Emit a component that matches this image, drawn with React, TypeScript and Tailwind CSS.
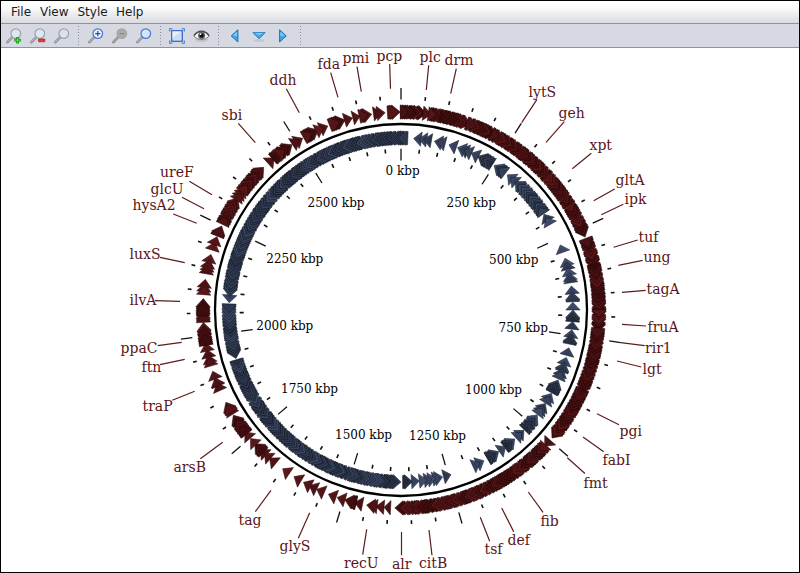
import React from "react";

const CX = 401;
const CY = 310;
const DEG_PER_50 = 6.5622;

type Pt = [number, number];

function polar(r: number, deg: number): Pt {
  const a = (deg * Math.PI) / 180;
  return [CX + r * Math.sin(a), CY - r * Math.cos(a)];
}

const str = (pts: Pt[]) => pts.map((p) => p[0].toFixed(2) + "," + p[1].toFixed(2)).join(" ");

// Small deterministic generator, so the gene spacing is stable between renders.
function makeRandom(seed: number) {
  let s = seed;
  return () => {
    s = (s * 16807) % 2147483647;
    return s / 2147483647;
  };
}

// [start angle, end angle, spacing between heads]
type Run = [number, number, number];

const FORWARD: Run[] = [
  [-4.1, -0.2, 1.1], [-0.2, 7.4, 0.95], [6.4, 8.8, 1.2], [7.9, 13.6, 1], [12.6, 20.5, 1], [20.4, 28.6, 1.1], [28.2, 49.5, 0.95],
  [48.5, 60, 1], [59, 68.4, 1], [68.8, 78, 1], [77.3, 92, 1.1], [91, 96.5, 1.1], [96, 115, 0.9], [114.6, 130.3, 0.95], [131, 133.5, 2.4],
  [133, 178.3, 0.95], [177.6, 181.8, 1.1],
  [183, 184.9, 2], [184.7, 187.3, 2.6], [186.9, 190, 1.2],
  [191.2, 193.6, 1.2], [193.1, 196.5, 0.8], [196, 198.8, 1.4], [198.9, 201.5, 2.6],
  [202.6, 205.2, 2.6], [205, 207.6, 2.6], [207, 209.5, 2.6], [209.7, 212.7, 1.2],
  [214.1, 216.7, 2.6], [219, 221.6, 2.6], [221.3, 225.3, 1.3], [224, 227.6, 1.1], [226.8, 229.5, 2.6],
  [229, 232, 2.6], [231.2, 237.9, 1], [237.9, 240.6, 2.6], [238.8, 242.2, 0.8],
  [245.8, 248.4, 2.6], [247.4, 250, 1.1], [249.4, 252, 2.6],
  [252.6, 258.5, 1.2], [257.6, 260.4, 2.6], [259.7, 266.4, 0.9], [266.4, 270, 1.1], [269, 273.3, 1.1],
  [274.3, 278.9, 1.4], [280.1, 286.3, 1.2], [287.6, 290, 2.6], [289.2, 291.7, 2.6],
  [291.9, 295.1, 1.1], [295.6, 304.5, 1.1], [303, 308, 1.2], [306.5, 316.1, 1],
  [317.4, 320.2, 2.6], [319.6, 323.5, 1.1], [322.6, 326.6, 1.1], [325.9, 330.2, 1.2],
  [330.5, 335.3, 0.9], [334.3, 338.3, 1.2], [338.8, 343.6, 1], [342.8, 345.8, 1.2],
  [345.9, 348, 2.2], [347.8, 351.5, 1.1], [352, 355.4, 1.2],
];

const REVERSE: Run[] = [
  [4.2, 6.8, 2.7], [6, 10.4, 1.7], [11.2, 15.2, 1.7], [16.2, 18.9, 2.7], [19.2, 24.5, 1.2],
  [24.2, 27.6, 1.7], [26.6, 32.2, 1.1], [32.8, 37.4, 1.1], [38.2, 42.6, 1.7], [41.6, 52.4, 1.1],
  [51.6, 56, 1.1], [56.2, 61, 1.6], [67.8, 70.7, 2.8], [72.5, 76.4, 1.5], [75.8, 81.2, 1.3],
  [82, 84.8, 2.7], [84, 87.3, 1.1], [87.4, 90.6, 1.6], [90, 93.9, 1.1], [93.8, 96.4, 2.6],
  [96.6, 99.3, 2.7], [98.2, 101.7, 1.1], [102.7, 105.5, 2.8], [106, 108.8, 2.7], [107.8, 111, 1.1], [110, 114.6, 1.2], [114, 118.8, 1.1],
  [119, 123, 1.2], [122.9, 127.8, 1.2], [127.6, 134.2, 1.1], [134.4, 138.4, 1.2],
  [138.6, 143, 1.1], [142.6, 145.4, 2.6], [145.4, 149.8, 1.1], [151.2, 153.8, 2.6], [152.7, 156.1, 1.2],
  [163.1, 165.7, 2.6], [166, 174.6, 1.2], [173.9, 176.5, 2.6], [176.2, 179.7, 1.1],
  [180, 184.5, 0.9], [184, 196, 1], [195.5, 231, 1], [230.6, 237.5, 1.1], [237, 253.2, 1], [253.6, 272, 1], [272.4, 275, 2], [274.4, 286, 1.05],
  [285.4, 302, 1], [301.4, 325, 1], [324.4, 341, 1], [340, 352, 1], [351, 355, 1.1], [354, 362.3, 1],
];

const REDS = ["#3a0c0d", "#481113", "#521416", "#370b0c", "#5a181a", "#4e1315"];
const BLUES = ["#252d3f", "#2c364c", "#344059", "#222a3a", "#3b4867", "#334060"];

interface Gene {
  body: string;
  fill: string;
  light: string;
}

// Neighbouring dense runs overlap, so no wedge of background opens between them.
function joinRuns(runs: Run[], dir: 1 | -1): Run[] {
  return runs.map(([a, b, step], i) => {
    const prev = runs[i - 1];
    const next = runs[i + 1];
    if (dir === 1 && prev && prev[1] > a && step < 1.15 && prev[2] < 1.15) return [a - 1.1, b, step];
    if (dir === -1 && next && next[0] < b && step < 1.15 && next[2] < 1.15) return [a, b + 1.4, step];
    return [a, b, step];
  });
}

function buildGenes(runs: Run[], radius: number, dir: 1 | -1, fills: string[], seed: number): Gene[] {
  const rnd = makeRandom(seed);
  const head = dir === 1 ? 2.4 : 2.6;
  const barb = 7.2;
  const half = 6.6;
  const genes: Gene[] = [];
  for (const [a, b, step] of joinRuns(runs, dir)) {
    const from = dir === 1 ? a : b;
    const length = b - a;
    const tips: number[] = [];
    let t = length;
    while (t >= Math.min(head * 0.9, length)) {
      tips.push(t);
      t -= step * (0.6 + rnd() * 0.8);
    }
    // Heads further along the strand are laid down first.
    for (const tip of tips) {
      const dense = step < 1.15;
      const base = Math.max(0, tip - head);
      const back = dense ? Math.max(0, base - step * 0.6) : base;
      const at = (r: number, d: number) => polar(r, from + dir * d);
      const pts: Pt[] = [
        at(radius - half, back),
        at(radius + half, back),
        at(radius + half, base),
        at(radius + barb, base),
        at(radius, tip),
        at(radius - barb, base),
        at(radius - half, base),
      ];
      const edge: Pt[] = [at(radius + half - 1, base + 0.15), at(radius, tip - 0.35), at(radius - half + 1, base + 0.15)];
      const shade = dense ? Math.floor(rnd() * 4) : [1, 2, 4, 5][Math.floor(rnd() * 4)];
      genes.push({ body: str(pts), fill: fills[shade], light: str(edge) });
    }
  }
  return genes;
}

const forwardGenes = buildGenes(FORWARD, 198, 1, REDS, 4711);
const reverseGenes = buildGenes(REVERSE, 172, -1, BLUES, 1234);

type Label = [string, number, number, number, number, number, number];

// name, text x, baseline, leader x1 y1 x2 y2
const LABELS: Label[] = [
  ["pcp", 376.5, 61, 389.7, 64, 390.5, 88.7],
  ["pmi", 342.5, 63, 357, 66.7, 361.3, 91.7],
  ["fda", 317.5, 69, 330.7, 72.7, 338, 97.3],
  ["ddh", 269.5, 85, 286.3, 88.7, 299.3, 112.7],
  ["sbi", 221.5, 120, 238.3, 123.3, 255.3, 142.7],
  ["plc", 419.5, 62, 428.7, 65.3, 426.3, 90],
  ["drm", 444.5, 65, 456.3, 68.7, 450.7, 93.7],
  ["lytS", 528.5, 97, 537, 99.3, 521.7, 122.7],
  ["geh", 558.5, 118, 564.3, 121.7, 546, 142.3],
  ["xpt", 589.5, 150, 591.3, 153.3, 572.3, 168.7],
  ["gltA", 615.5, 185, 614.7, 189, 593.7, 200.7],
  ["ipk", 624.5, 204, 623.3, 204.3, 601.3, 214.7],
  ["tuf", 638.5, 242, 637.7, 240, 613.7, 247.3],
  ["ung", 643.5, 262, 642.7, 260.3, 618.3, 265.3],
  ["tagA", 646.5, 294, 645.7, 290.3, 622, 292.3],
  ["fruA", 647.5, 332, 646, 326, 622, 324.3],
  ["rir1", 645, 353, 644.7, 345.7, 620.7, 342.7],
  ["lgt", 642.5, 374, 641.3, 367, 617, 361],
  ["pgi", 619.5, 436, 619, 424.7, 597, 413.7],
  ["fabI", 602.5, 465, 603.7, 451.7, 583, 437],
  ["fmt", 583.5, 488, 585, 473.5, 567.3, 457.7],
  ["fib", 540.5, 526, 543, 512.3, 528.3, 492],
  ["def", 507.5, 545, 513.7, 531.7, 501.7, 508],
  ["tsf", 484.5, 554, 489.7, 541.3, 480.3, 517.3],
  ["citB", 419, 568, 432, 555.3, 429, 530],
  ["alr", 392, 569, 401.5, 555.3, 401.5, 532],
  ["recU", 344, 568, 362.7, 554.7, 366.7, 529.3],
  ["glyS", 279.5, 551, 298.3, 538.3, 309.7, 512.7],
  ["tag", 238.5, 525, 255.3, 511.7, 271, 490.3],
  ["arsB", 173.5, 472, 200.3, 458.7, 222.7, 442.3],
  ["traP", 142.5, 411, 172.3, 400.3, 194.7, 391.3],
  ["ftn", 141.5, 372, 160, 364.7, 184.7, 359.3],
  ["ppaC", 120.5, 353, 157.7, 345.7, 181.7, 342.3],
  ["ilvA", 129.5, 305, 155, 300.7, 180, 301.3],
  ["luxS", 129.5, 259, 160, 257.3, 184.7, 262.7],
  ["hysA2", 132.5, 210, 173.3, 214, 196.7, 223.3],
  ["glcU", 150.5, 194, 182, 197.3, 204, 208.7],
  ["ureF", 160, 177, 189.3, 181.3, 212, 194.7],
];

const SCALE: [string, number, number][] = [
  ["0 kbp", 385.5, 175],
  ["250 kbp", 446.5, 207],
  ["500 kbp", 489, 264],
  ["750 kbp", 498.5, 332],
  ["1000 kbp", 465, 394],
  ["1250 kbp", 409, 440],
  ["1500 kbp", 335, 439],
  ["1750 kbp", 281, 393],
  ["2000 kbp", 256.3, 330],
  ["2250 kbp", 266.3, 263],
  ["2500 kbp", 307.5, 207],
];

const ticks = Array.from({ length: 55 }, (_, i) => {
  const deg = i * DEG_PER_50;
  const major = i % 5 === 0;
  return {
    major,
    outer: [polar(210.5, deg), polar(major ? 222 : 214.3, deg)],
    inner: [polar(161.3, deg), polar(major ? 149.6 : 157.3, deg)],
  };
});

function GenomeMap() {
  return (
    <svg width="798" height="524" viewBox="1 48 798 524" className="block">
      <circle cx={CX} cy={CY} r="186" fill="none" stroke="#000" strokeWidth="2.3" />
      {forwardGenes.map((g, i) => (
        <g key={i}>
          <polygon points={g.body} fill={g.fill} stroke="#1f0506" strokeWidth="0.5" />
          <polyline points={g.light} fill="none" stroke="#7a2426" strokeWidth="0.5" opacity="0.6" />
        </g>
      ))}
      {reverseGenes.map((g, i) => (
        <g key={i}>
          <polygon points={g.body} fill={g.fill} stroke="#10151f" strokeWidth="0.5" />
          <polyline points={g.light} fill="none" stroke="#566589" strokeWidth="0.5" opacity="0.6" />
        </g>
      ))}
      <g className="font-['DejaVu_Serif',serif] text-[14px]" fill="#5a1518">
        {LABELS.map(([name, x, y, x1, y1, x2, y2]) => (
          <g key={name}>
            <line x1={x1} y1={y1} x2={x2} y2={y2} stroke="#5e1a1c" strokeWidth="1.2" />
            <text x={x} y={y}>{name}</text>
          </g>
        ))}
      </g>
      {ticks.map((t, i) => (
        <g key={i} stroke="#111" strokeWidth={t.major ? 1.3 : 1.6}>
          <line x1={t.outer[0][0]} y1={t.outer[0][1]} x2={t.outer[1][0]} y2={t.outer[1][1]} />
          <line x1={t.inner[0][0]} y1={t.inner[0][1]} x2={t.inner[1][0]} y2={t.inner[1][1]} />
        </g>
      ))}
      <g className="font-['DejaVu_Serif',serif] text-[12px]" fill="#000">
        {SCALE.map(([name, x, y]) => (
          <text key={name} x={x} y={y}>{name}</text>
        ))}
      </g>
    </svg>
  );
}

function Magnifier({ ring, lens, handle = "#b4b6b7", children }: { ring: string; lens: string; handle?: string; children?: React.ReactNode }) {
  return (
    <svg width="16" height="16" viewBox="0 0 16 16" className="shrink-0">
      <path d="M6 9.4 L1.4 14.2" stroke="#7d7f80" strokeWidth="2.4" strokeLinecap="round" />
      <path d="M6 9.2 L1.5 13.8" stroke={handle} strokeWidth="1.3" strokeLinecap="round" />
      <circle cx="9.8" cy="5.6" r="4.8" fill={lens} stroke={ring} strokeWidth="1.2" />
      {children}
    </svg>
  );
}

function Separator() {
  return (
    <div className="h-[19px] w-px shrink-0 bg-[repeating-linear-gradient(to_bottom,#8b8e9b_0px,#8b8e9b_1px,transparent_1px,transparent_3px)]" />
  );
}

function Toolbar() {
  return (
    <div className="flex h-6 shrink-0 items-center border-b border-[#8f929f] bg-[#d6d9e2] pl-[5px]">
      <div className="flex w-[72px] gap-2">
        <Magnifier ring="#9fa3a6" lens="#dbe9f5">
          <path d="M11.6 8.9v6.6M8.3 12.2h6.6" stroke="#0c8a14" strokeWidth="2.8" />
          <path d="M11.6 9.4v5.6M8.8 12.2h5.6" stroke="#4fdc4c" strokeWidth="1.2" />
        </Magnifier>
        <Magnifier ring="#9fa3a6" lens="#dbe9f5">
          <rect x="8.5" y="11" width="6.4" height="2.8" rx="0.6" fill="#e03a3a" stroke="#b01818" strokeWidth="0.7" />
        </Magnifier>
        <Magnifier ring="#9fa3a6" lens="#d6e4ef" />
      </div>
      <Separator />
      <div className="ml-[9px] flex w-[72px] gap-2">
        <Magnifier ring="#4a70d2" lens="#eef5ff">
          <path d="M9.8 3v5.2M7.2 5.6h5.2" stroke="#1f48b4" strokeWidth="1.2" />
        </Magnifier>
        <Magnifier ring="#a4a5a6" lens="#ababab" handle="#a6a7a8">
          <path d="M7.4 5.6h4.8" stroke="#858686" strokeWidth="1.2" />
        </Magnifier>
        <Magnifier ring="#4a74d8" lens="#d3e5f8" />
      </div>
      <Separator />
      <div className="ml-2 flex w-[49px] items-center gap-2">
        <svg width="16" height="16" viewBox="0 0 16 16">
          <rect x="2.7" y="2.7" width="10.6" height="10.6" fill="#c9ddf3" stroke="#315fc9" strokeWidth="1.2" />
          <path d="M3.5 3.5h9L3.5 10z" fill="#e4effa" />
          <path d="M0.7 3.4V0.7h2.7M12.6 0.7h2.7v2.7M15.3 12.6v2.7h-2.7M3.4 15.3H0.7v-2.7" fill="none" stroke="#4474e0" strokeWidth="1.1" />
        </svg>
        <svg width="17" height="16" viewBox="0 0 17 16">
          <ellipse cx="8.5" cy="11.8" rx="6.5" ry="2.2" fill="#bfc1c6" />
          <path d="M0.8 8.2Q4 3.8 8.5 3.8T16.2 8.2Q13 11.6 8.5 11.6T0.8 8.2Z" fill="#f4f4f2" stroke="#6d6e6e" strokeWidth="0.9" />
          <path d="M0.9 7.6Q4 3.2 8.5 3.2T16.1 7.6" fill="none" stroke="#444" strokeWidth="1.2" />
          <circle cx="8.6" cy="7.6" r="3.5" fill="#5d5f5f" />
          <circle cx="8.6" cy="7.6" r="2.1" fill="#0d0d0d" />
          <circle cx="7.5" cy="6.2" r="0.9" fill="#fff" />
        </svg>
      </div>
      <Separator />
      <div className="ml-2 flex w-[73px] gap-2">
        <svg width="16" height="16" viewBox="0 0 16 16">
          <path d="M10.9 1.8v12.2L4.2 7.9z" fill="#41a6e8" stroke="#1568ad" strokeWidth="0.9" />
          <path d="M10 3.8v4L6 7.8z" fill="#8ccdf6" />
        </svg>
        <svg width="16" height="16" viewBox="0 0 16 16">
          <ellipse cx="8" cy="12.5" rx="5.5" ry="1.2" fill="#c1c5cf" />
          <path d="M1.8 4.6h12.4L8.1 10.8z" fill="#41a6e8" stroke="#2b7fc0" strokeWidth="0.9" />
          <path d="M3.8 5.2h8.4L8.1 6.8z" fill="#a5dafa" />
        </svg>
        <svg width="16" height="16" viewBox="0 0 16 16">
          <path d="M4.6 1.8v12.2l6.7-6.1z" fill="#41a6e8" stroke="#1568ad" strokeWidth="0.9" />
          <path d="M5.5 3.8v4h4z" fill="#8ccdf6" />
        </svg>
      </div>
      <Separator />
    </div>
  );
}

export default function App() {
  return (
    <div className="flex h-[573px] w-[800px] flex-col overflow-hidden border border-black bg-white">
      <nav className="flex h-[23px] shrink-0 items-center border-b border-[#8f929f] bg-linear-to-b from-white from-20% to-[#d9dbe1] pl-2.5 font-['DejaVu_Sans',sans-serif] text-[12px] text-[#1c1c1c]">
        <span className="w-[29px]">File</span>
        <span className="w-[37.5px]">View</span>
        <span className="w-[38.5px]">Style</span>
        <span>Help</span>
      </nav>
      <Toolbar />
      <GenomeMap />
    </div>
  );
}
